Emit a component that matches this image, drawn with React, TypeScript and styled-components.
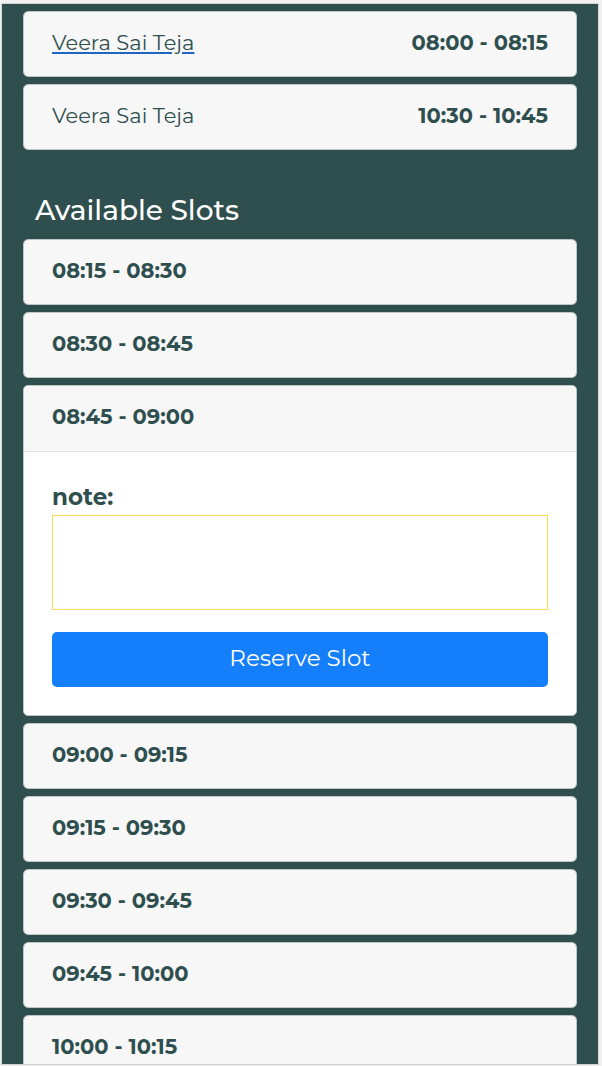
import React, { useState } from "react";
import styled, { createGlobalStyle, css } from "styled-components";

const GlobalStyle = createGlobalStyle`
  *, *::before, *::after { box-sizing: border-box; }
  body {
    margin: 0;
    background: #f0f0f0;
    color: #2f4f4f;
    font-family: Montserrat, Inter, "Liberation Sans", sans-serif;
    font-size: 21px;
    line-height: 32px;
  }
  button, textarea { font: inherit; }
`;

const Frame = styled.main`
  height: 100vh;
  padding: 3px 3px 1px 1px;
`;

const Panel = styled.div`
  height: 100%;
  overflow: hidden;
  padding: 7px 21px 0;
  border: 1px solid #d2d4d4;
  background: #2f4f4f;
`;

const SlotList = styled.section`
  display: flex;
  flex-direction: column;
  gap: 7px;
`;

const Card = styled.article`
  flex: none;
  overflow: hidden;
  border: 1px solid #bdc5c5;
  border-radius: 5px;
  background: #ffffff;
`;

const headerStyle = css`
  display: flex;
  align-items: center;
  justify-content: space-between;
  width: 100%;
  height: 64px;
  padding: 0 28px 2px;
  background: #f7f7f7;
  color: inherit;
`;

const BookingHeader = styled.header`
  ${headerStyle}
`;

const SlotToggle = styled.button<{ $open: boolean }>`
  ${headerStyle}
  border: 0;
  cursor: pointer;
  ${({ $open }) =>
    $open &&
    css`
      height: 66px;
      padding-bottom: 3px;
      border-bottom: 1px solid #dfdfdf;
    `}
`;

const PersonLink = styled.a<{ $underlined?: boolean }>`
  color: #2f4f4f;
  text-decoration-line: ${({ $underlined }) => ($underlined ? "underline" : "none")};
  text-decoration-color: #1f66c1;
  text-decoration-thickness: 2px;
  text-underline-offset: 2px;
`;

const Time = styled.time`
  font-weight: 700;
`;

const Heading = styled.h2`
  margin: 0;
  padding: 42px 12px 11px;
  color: #ffffff;
  font-size: 28px;
  font-weight: 500;
  line-height: 36px;
`;

const ReserveForm = styled.form`
  display: flex;
  flex-direction: column;
  padding: 27px 28px 28px;
`;

const NoteLabel = styled.label`
  font-size: 23px;
  font-weight: 700;
  line-height: 36px;
`;

const NoteInput = styled.textarea`
  width: 100%;
  height: 95px;
  margin-bottom: 22px;
  padding: 8px;
  border: 1px solid #fbd951;
  outline: 0;
  background: #ffffff;
  color: inherit;
  resize: none;
`;

const ReserveButton = styled.button`
  height: 55px;
  padding: 0 16px 4px;
  border: 0;
  border-radius: 5px;
  background: #157efb;
  color: #ffffff;
  font-size: 23px;
  cursor: pointer;
`;

const bookings = [
  { name: "Veera Sai Teja", time: "08:00 - 08:15", underlined: true },
  { name: "Veera Sai Teja", time: "10:30 - 10:45", underlined: false },
];

const slots = [
  "08:15 - 08:30",
  "08:30 - 08:45",
  "08:45 - 09:00",
  "09:00 - 09:15",
  "09:15 - 09:30",
  "09:30 - 09:45",
  "09:45 - 10:00",
  "10:00 - 10:15",
];

export default function App() {
  const [openSlot, setOpenSlot] = useState<string | null>("08:45 - 09:00");

  return (
    <>
      <GlobalStyle />
      <Frame>
        <Panel>
          <SlotList>
            {bookings.map((booking) => (
              <Card key={booking.time}>
                <BookingHeader>
                  <PersonLink href="#booking" $underlined={booking.underlined}>
                    {booking.name}
                  </PersonLink>
                  <Time>{booking.time}</Time>
                </BookingHeader>
              </Card>
            ))}
          </SlotList>
          <Heading>Available Slots</Heading>
          <SlotList>
            {slots.map((slot) => {
              const open = slot === openSlot;
              return (
                <Card key={slot}>
                  <SlotToggle
                    type="button"
                    $open={open}
                    aria-expanded={open}
                    onClick={() => setOpenSlot(open ? null : slot)}
                  >
                    <Time>{slot}</Time>
                  </SlotToggle>
                  {open && (
                    <ReserveForm onSubmit={(event) => event.preventDefault()}>
                      <NoteLabel htmlFor="note">note:</NoteLabel>
                      <NoteInput id="note" />
                      <ReserveButton type="submit">Reserve Slot</ReserveButton>
                    </ReserveForm>
                  )}
                </Card>
              );
            })}
          </SlotList>
        </Panel>
      </Frame>
    </>
  );
}
